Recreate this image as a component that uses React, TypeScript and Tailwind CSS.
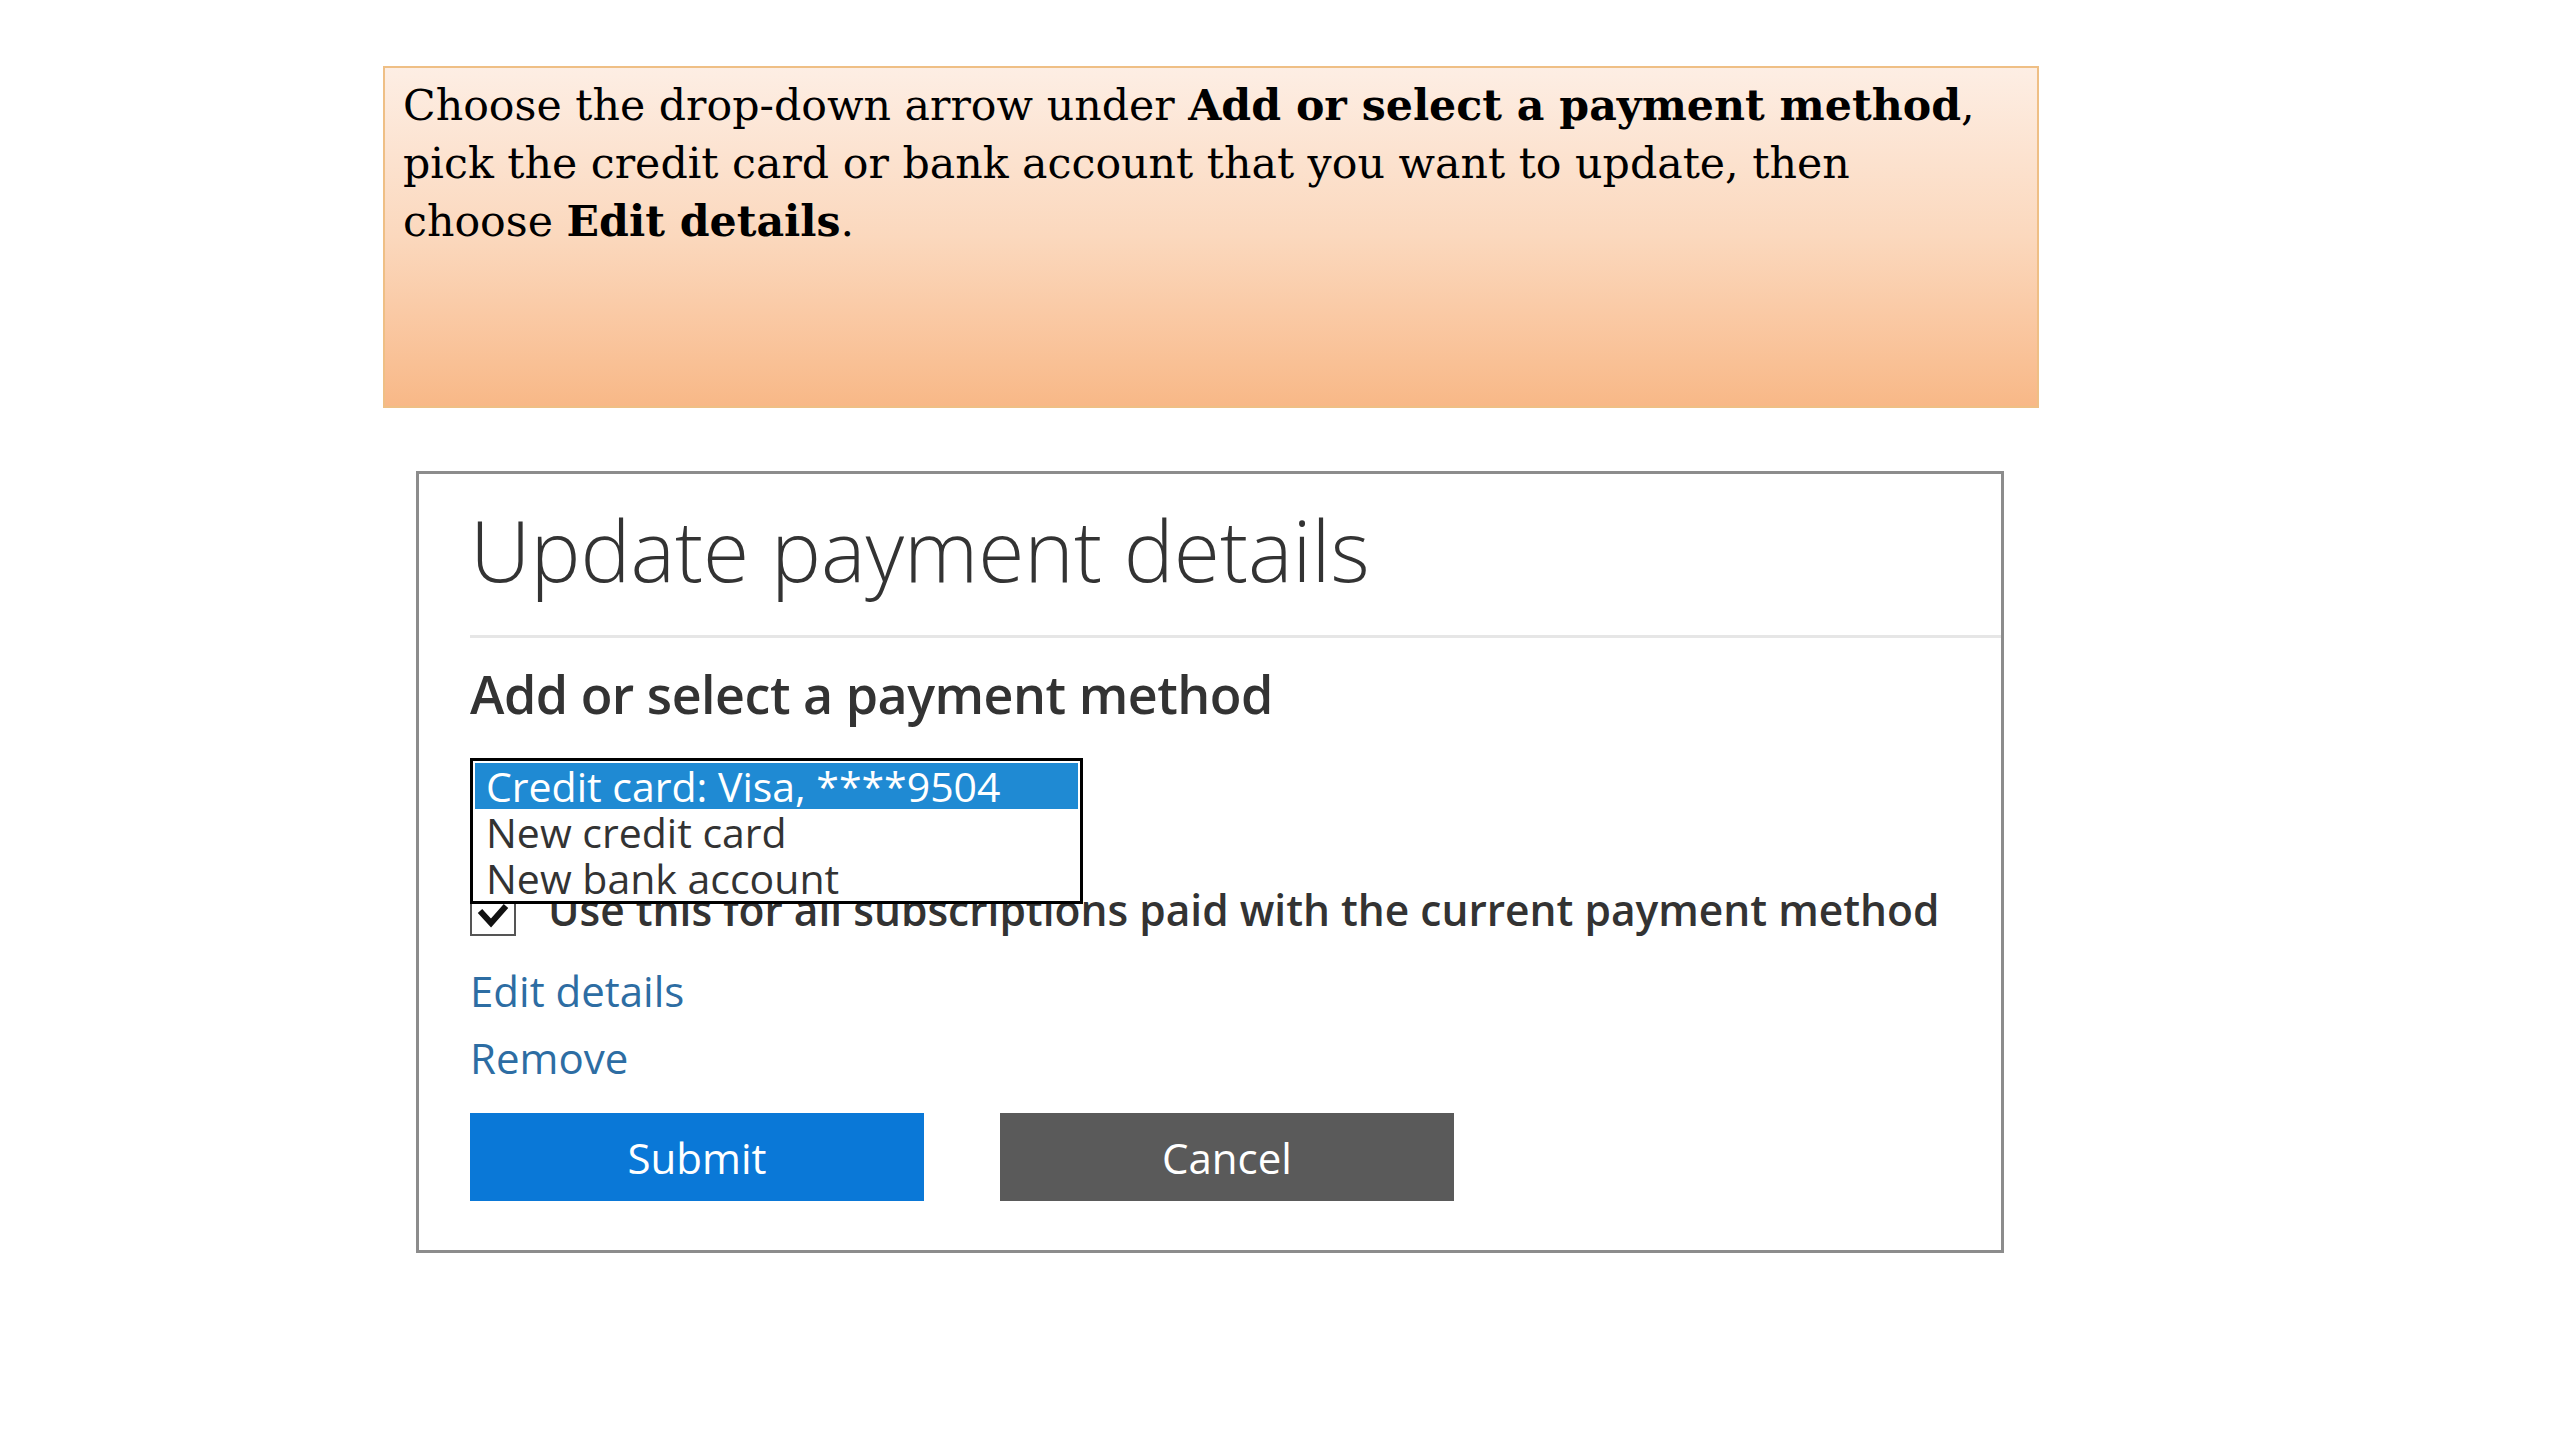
export default function App() {
  const ui = { fontFamily: '"Open Sans", "Noto Sans", sans-serif' };
  return (
    <div className="w-[2560px] h-[1440px] bg-white relative">
      {/* instruction callout */}
      <div className="pt-[66px] pl-[383px]">
        <div
          className="w-[1656px] h-[342px] border-2 border-[#efbf85] bg-gradient-to-b from-[#fdeee4] via-[#fbd8bd] to-[#f8b887] pl-[18px] pt-[8px] text-[42.7px] leading-[58px] text-black"
          style={{ fontFamily: '"DejaVu Serif", "Liberation Serif", serif' }}
        >
          <p>
            Choose the drop-down arrow under <b>Add or select a payment method</b>,
            <br />
            pick the credit card or bank account that you want to update, then
            <br />
            choose <b>Edit details</b>.
          </p>
        </div>
      </div>

      {/* dialog screenshot */}
      <div className="pt-[63px] pl-[416px]">
        <div className="w-[1588px] h-[782px] border-[3px] border-[#8c8c8c] bg-white pl-[51px]" style={ui}>
          <h1 className="pt-[28px] text-[84px] leading-[96px] font-light text-[#333]">Update payment details</h1>
          <div className="mt-[37px] h-[3px] bg-[#e6e6e6]" />
          <h2 className="mt-[28px] text-[52px] leading-[56px] font-semibold text-[#333] tracking-[-0.5px]">
            Add or select a payment method
          </h2>

          <div className="relative mt-[166px]">
            <div className="absolute left-0 top-[-130px] w-[613px] border-[3px] border-black bg-white text-[41px] leading-[46px]">
              <div className="bg-[#1f8ad3] text-white pl-[11px] mt-[2px] mx-[2px]">Credit card: Visa, ****9504</div>
              <div className="text-[#333] pl-[13px]">New credit card</div>
              <div className="text-[#333] pl-[13px]">New bank account</div>
            </div>
            <div className="flex items-center gap-[32px] h-[44px]">
              <div className="w-[46px] h-[40px] mt-[12px] border-2 border-[#555] flex items-center justify-center">
                <svg width="34" height="28" viewBox="0 0 34 28">
                  <path d="M4 9 L15 21 L30 4" fill="none" stroke="#111" strokeWidth="6" />
                </svg>
              </div>
              <span className="text-[42.5px] font-semibold text-[#333]">
                Use this for all subscriptions paid with the current payment method
              </span>
            </div>
          </div>

          <div className="mt-[36px] text-[42px] leading-[46px] text-[#2d6da3]">Edit details</div>
          <div className="mt-[21px] text-[42px] leading-[46px] text-[#2d6da3]">Remove</div>

          <div className="mt-[32px] flex gap-[76px]">
            <button className="w-[454px] h-[88px] bg-[#0a78d7] text-white text-[42px]">Submit</button>
            <button className="w-[454px] h-[88px] bg-[#5a5a5a] text-white text-[42px]">Cancel</button>
          </div>
        </div>
      </div>
    </div>
  );
}
